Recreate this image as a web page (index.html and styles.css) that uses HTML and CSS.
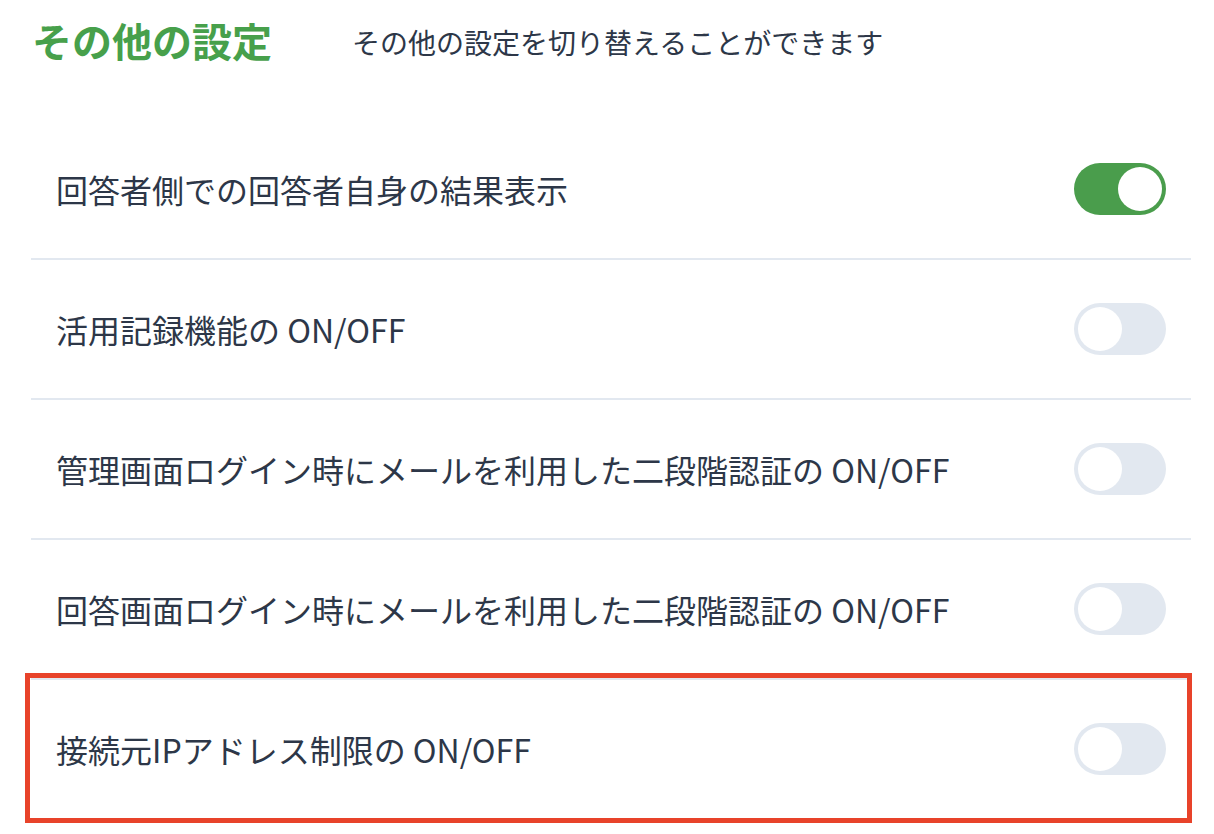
FILE: index.html
```html
<html>
<head>
    <meta charset="utf-8">
    <link rel="stylesheet" href="styles.css">
</head>
    <body>
        <div class="setPage">
            <div class="setHead">
                <div class="setTitle">その他の設定</div>
                <div class="setSub">その他の設定を切り替えることができます</div>
            </div>

            <div class="setList">
                <div class="setRow">
                    <div class="rowLabel">回答者側での回答者自身の結果表示</div>
                    <div class="tglBox tglOn"><div class="tglKnob"></div></div>
                </div>
                <div class="setRow">
                    <div class="rowLabel">活用記録機能の ON/OFF</div>
                    <div class="tglBox"><div class="tglKnob"></div></div>
                </div>
                <div class="setRow">
                    <div class="rowLabel">管理画面ログイン時にメールを利用した二段階認証の ON/OFF</div>
                    <div class="tglBox"><div class="tglKnob"></div></div>
                </div>
                <div class="setRow">
                    <div class="rowLabel">回答画面ログイン時にメールを利用した二段階認証の ON/OFF</div>
                    <div class="tglBox"><div class="tglKnob"></div></div>
                </div>
                <div class="setRow rowMarked">
                    <div class="rowLabel">接続元IPアドレス制限の ON/OFF</div>
                    <div class="tglBox"><div class="tglKnob"></div></div>
                </div>
            </div>
        </div>
    </body>
</html>
```

FILE: styles.css
```css
 body {
     margin: 0;
     background-color: #ffffff;
     font-family: "Noto Sans CJK JP", sans-serif;
     color: #2d3748;
 }
 .setPage {
     width: 1160px;
     padding: 12px 0px 0px 31px;
 }
 .setHead {
     height: 56px;
     display: flex;
     align-items: center;
 }
 .setTitle {
     font-size: 40px;
     font-weight: bold;
     color: #47a04b;
     padding: 0px 0px 0px 1px;
 }
 .setSub {
     font-size: 28px;
     margin: 4px 0px 0px 80px;
 }
 .setList {
     margin: 52px 0px 0px 0px;
 }
 .setRow {
     height: 138px;
     display: flex;
     align-items: center;
     justify-content: space-between;
     padding: 0px 25px 0px 25px;
     border-bottom: 2px solid #e2e8f0;
 }
 .rowLabel {
     font-size: 32px;
 }
 .rowMarked {
     height: 139px;
     margin: -7px -1px 0px -6px;
     padding: 1px 21px 0px 26px;
     border: 5px solid #e8432a;
 }
 .tglBox {
     width: 92px;
     height: 52px;
     border-radius: 26px;
     background-color: #e2e8f0;
     display: flex;
     align-items: center;
     padding: 0px 4px 0px 4px;
     box-sizing: border-box;
 }
 .tglKnob {
     width: 44px;
     height: 44px;
     border-radius: 50%;
     background-color: #ffffff;
 }
 .tglOn {
     background-color: #4a9d4c;
     justify-content: flex-end;
 }
```
